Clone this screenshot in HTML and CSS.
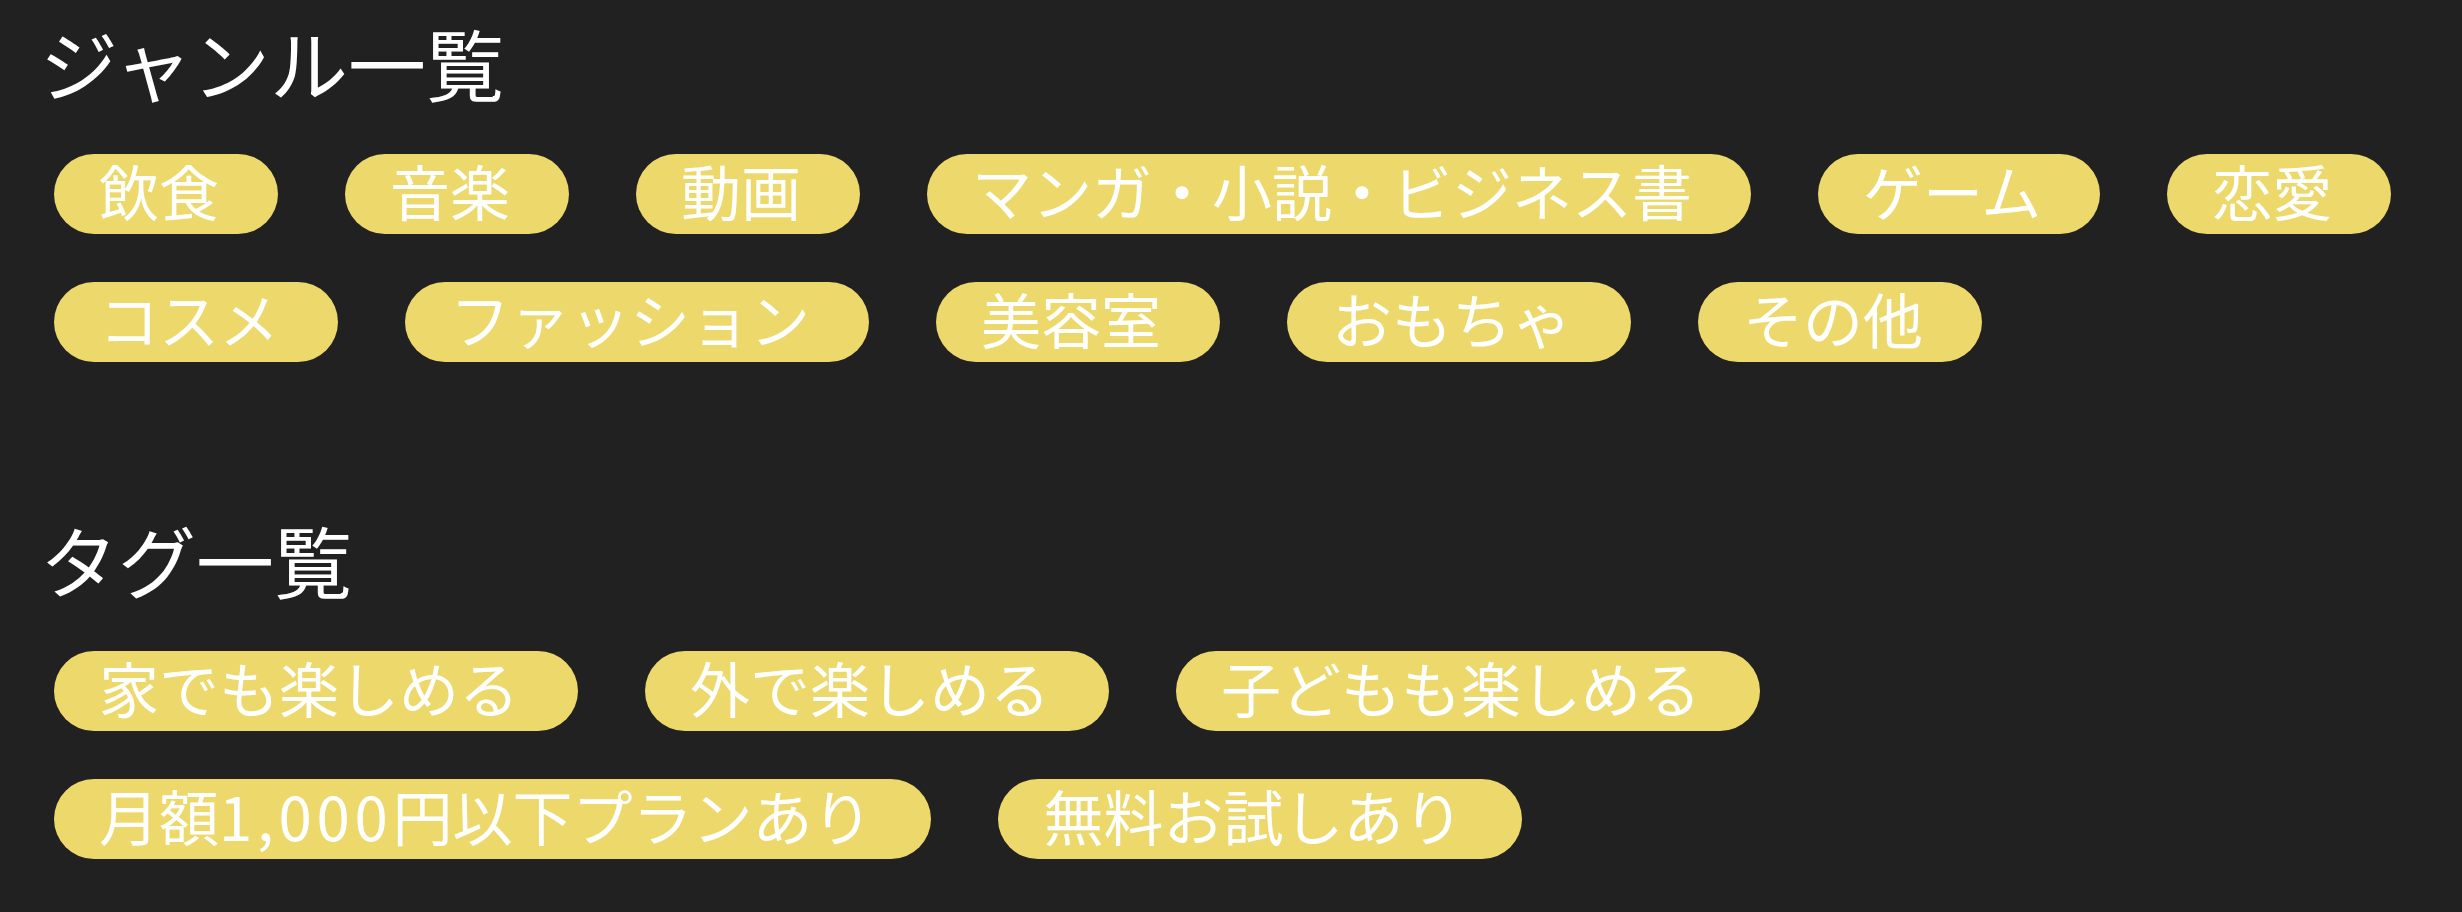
FILE: index.html
```html
<!DOCTYPE html>
<html lang="ja">
<head>
<meta charset="utf-8">
<title>ジャンル一覧</title>
<link rel="stylesheet" href="styles.css">
</head>
<body>
<main class="page">
  <section class="group">
    <h2 class="title">ジャンル一覧</h2>
    <ul class="pill-list">
      <li class="pill">飲食</li>
      <li class="pill">音楽</li>
      <li class="pill">動画</li>
      <li class="pill">マンガ・小説・ビジネス書</li>
      <li class="pill">ゲーム</li>
      <li class="pill">恋愛</li>
      <li class="pill">コスメ</li>
      <li class="pill">ファッション</li>
      <li class="pill">美容室</li>
      <li class="pill">おもちゃ</li>
      <li class="pill">その他</li>
    </ul>
  </section>
  <section class="group group-tags">
    <h2 class="title">タグ一覧</h2>
    <ul class="pill-list">
      <li class="pill">家でも楽しめる</li>
      <li class="pill">外で楽しめる</li>
      <li class="pill">子どもも楽しめる</li>
      <li class="pill">月額<span class="num">1,000</span>円以下プランあり</li>
      <li class="pill">無料お試しあり</li>
    </ul>
  </section>
</main>
</body>
</html>
```

FILE: styles.css
```css
html, body {
  margin: 0;
  padding: 0;
  background: #212121;
}

body {
  font-family: "Noto Sans CJK JP", "Noto Sans", sans-serif;
  color: #ffffff;
}

.page {
  padding: 23px 0 0 40px;
}

.title {
  margin: 0;
  font-size: 78px;
  line-height: 78px;
  font-weight: 400;
  color: #ffffff;
}

.pill-list {
  list-style: none;
  margin: 53px 0 0 14px;
  padding: 0;
  display: flex;
  flex-wrap: wrap;
  gap: 48px 67px;
}

.pill {
  background: #edd96b;
  color: #ffffff;
  border-radius: 40px;
  padding: 0 59px 8px 45px;
  font-size: 60px;
  line-height: 72px;
  height: 72px;
  white-space: nowrap;
}

.num {
  letter-spacing: 4.7px;
}

.group-tags {
  margin-top: 158px;
}
```
